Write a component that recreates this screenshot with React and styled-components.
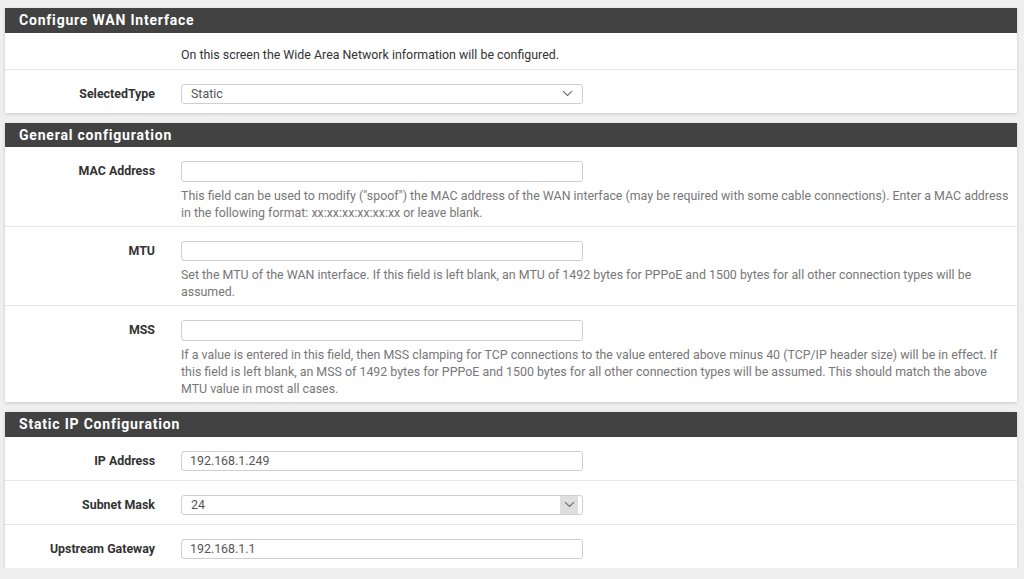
import React from "react";
import styled, { createGlobalStyle } from "styled-components";

const GlobalStyle = createGlobalStyle`
  html, body {
    margin: 0;
    padding: 0;
    background: #efefef;
    font-family: Roboto, "Liberation Sans", Arial, sans-serif;
    font-size: 12.4px;
    color: #333;
  }
`;

const Page = styled.div`
  padding: 8px 7px 0 5px;
  display: flex;
  flex-direction: column;
  gap: 10px;
`;

const Panel = styled.section`
  background: #fff;
  box-shadow: 0 1px 3px rgba(0, 0, 0, 0.16);
`;

const PanelHeading = styled.h2`
  margin: 0;
  height: 24.5px;
  line-height: 24.5px;
  padding: 0 14px;
  background: #424242;
  color: #fff;
  font-size: 14px;
  font-weight: 700;
  letter-spacing: 0.8px;
`;

const Row = styled.div`
  display: grid;
  grid-template-columns: 163px 1fr;
  padding: ${(p) => (p.$note ? "13.5px 0 5px" : "14px 0 8.5px")};
  border-top: 1px solid #e6e6e6;

  &:first-of-type {
    border-top: none;
  }
`;

const Label = styled.label`
  padding-right: 13px;
  text-align: right;
  font-weight: 700;
  color: #333;
  line-height: 20px;
`;

const Control = styled.div`
  padding: 0 2px 0 13px;
`;

const Note = styled.p`
  margin: 0;
  line-height: 17.5px;
  color: #333;
`;

const TextInput = styled.input`
  box-sizing: border-box;
  display: block;
  width: 402px;
  height: 20.5px;
  padding: 0 8px;
  border: 1px solid #cfcfcf;
  border-radius: 3px;
  font: inherit;
  color: #555;
  background: #fff;
  outline: none;
`;

const SelectBox = styled.div`
  box-sizing: border-box;
  display: flex;
  align-items: center;
  width: 402px;
  height: 20.5px;
  border: 1px solid #cfcfcf;
  border-radius: 3px;
  color: #555;
  background: #fff;
  overflow: hidden;
`;

const SelectValue = styled.span`
  flex: 1;
  padding-left: 9px;
`;

const Arrow = styled.span`
  display: flex;
  align-items: center;
  justify-content: center;
  align-self: stretch;
  width: 18px;
  margin-right: ${(p) => (p.$boxed ? "4px" : "6px")};
  background: ${(p) => (p.$boxed ? "#dedede" : "transparent")};
`;

const Help = styled.p`
  margin: 5px 0 -3.5px;
  line-height: 17.1px;
  color: #777;
`;

function Chevron() {
  return (
    <svg width="11" height="7" viewBox="0 0 11 7">
      <path d="M1 1.2 L5.5 5.5 L10 1.2" fill="none" stroke="#6a6a6a" strokeWidth="1.1" />
    </svg>
  );
}

function Select({ value, boxed }) {
  return (
    <SelectBox>
      <SelectValue>{value}</SelectValue>
      <Arrow $boxed={boxed}>
        <Chevron />
      </Arrow>
    </SelectBox>
  );
}

function Field({ label, help, children }) {
  return (
    <Row>
      <Label>{label}</Label>
      <Control>
        {children}
        {help && <Help>{help}</Help>}
      </Control>
    </Row>
  );
}

export default function App() {
  return (
    <>
      <GlobalStyle />
      <Page>
        <Panel>
          <PanelHeading>Configure WAN Interface</PanelHeading>
          <Row $note>
            <span />
            <Control>
              <Note>On this screen the Wide Area Network information will be configured.</Note>
            </Control>
          </Row>
          <Field label="SelectedType">
            <Select value="Static" />
          </Field>
        </Panel>

        <Panel>
          <PanelHeading>General configuration</PanelHeading>
          <Field
            label="MAC Address"
            help={'This field can be used to modify ("spoof") the MAC address of the WAN interface (may be required with some cable connections). Enter a MAC address in the following format: xx:xx:xx:xx:xx:xx or leave blank.'}
          >
            <TextInput />
          </Field>
          <Field
            label="MTU"
            help="Set the MTU of the WAN interface. If this field is left blank, an MTU of 1492 bytes for PPPoE and 1500 bytes for all other connection types will be assumed."
          >
            <TextInput />
          </Field>
          <Field
            label="MSS"
            help="If a value is entered in this field, then MSS clamping for TCP connections to the value entered above minus 40 (TCP/IP header size) will be in effect. If this field is left blank, an MSS of 1492 bytes for PPPoE and 1500 bytes for all other connection types will be assumed. This should match the above MTU value in most all cases."
          >
            <TextInput />
          </Field>
        </Panel>

        <Panel>
          <PanelHeading>Static IP Configuration</PanelHeading>
          <Field label="IP Address">
            <TextInput defaultValue="192.168.1.249" />
          </Field>
          <Field label="Subnet Mask">
            <Select value="24" boxed />
          </Field>
          <Field label="Upstream Gateway">
            <TextInput defaultValue="192.168.1.1" />
          </Field>
        </Panel>
      </Page>
    </>
  );
}
